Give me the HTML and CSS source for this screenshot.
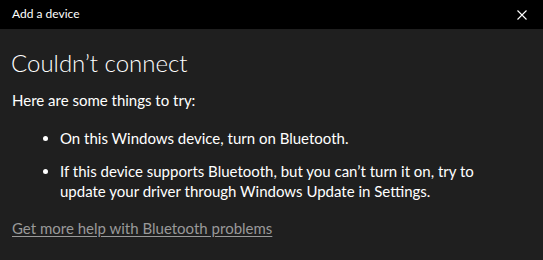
FILE: index.html
```html
<!DOCTYPE html>
<html lang="en">
<head>
<meta charset="utf-8">
<title>Add a device</title>
<link rel="stylesheet" href="styles.css">
</head>
<body>
<div class="window">
  <header class="titlebar">
    <span class="title">Add a device</span>
    <button class="close" aria-label="Close">
      <svg width="10" height="10" viewBox="0 0 10 10"><path d="M0.5 0.5 L9.5 9.5 M9.5 0.5 L0.5 9.5" stroke="#fff" stroke-width="1.1" fill="none"/></svg>
    </button>
  </header>
  <main class="content">
    <h1 class="heading">Couldn’t connect</h1>
    <p class="intro">Here are some things to try:</p>
    <ul class="tips">
      <li>On this Windows device, turn on Bluetooth.</li>
      <li>If this device supports Bluetooth, but you can’t turn it on, try to update your driver through Windows Update in Settings.</li>
    </ul>
    <a class="help" href="#">Get more help with Bluetooth problems</a>
  </main>
</div>
</body>
</html>
```
FILE: styles.css
```css
* { box-sizing: border-box; }
html, body { margin: 0; padding: 0; }
body {
  background: #1f1f1f;
  font-family: "Lato", "Noto Sans", sans-serif;
  color: #fff;
  width: 543px;
  height: 260px;
  overflow: hidden;
}
.window { display: flex; flex-direction: column; height: 260px; }
.titlebar {
  height: 29px;
  background: #000;
  display: flex;
  align-items: center;
  justify-content: space-between;
  padding: 0 0 0 12px;
}
.title { font-size: 12px; color: #fff; padding-bottom: 2px; }
.close {
  background: none;
  border: 0;
  width: 46px;
  height: 29px;
  display: flex;
  align-items: center;
  justify-content: center;
  padding: 0;
  margin-right: -2px;
}
.content { padding: 0 12px; display: flex; flex-direction: column; align-items: flex-start; }
.heading {
  margin: 18px 0 0 -1px;
  font-size: 24px;
  font-weight: 300;
  line-height: 32px;
}
.intro {
  margin: 11px 0 0;
  font-size: 15px;
  line-height: 20px;
}
.tips {
  margin: 18px 0 0;
  padding: 0 50px 0 48px;
  font-size: 15px;
  line-height: 20px;
}
.tips li + li { margin-top: 13px; }
.help {
  display: inline-block;
  margin-top: 17px;
  font-size: 15px;
  line-height: 20px;
  color: #999;
  text-decoration: underline;
  text-underline-offset: 2px;
}
```
